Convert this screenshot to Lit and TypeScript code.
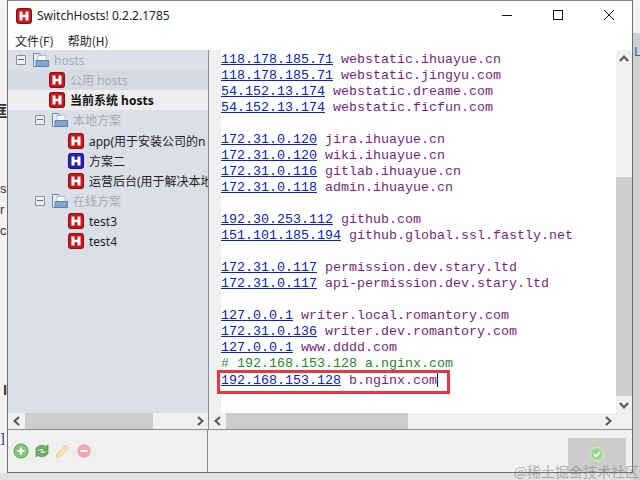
import { LitElement, html, css, svg } from "lit";
import { customElement } from "lit/decorators.js";

type Tok = [string, string];
const LINES: Tok[][] = [
  [["ip","118.178.185.71"],["d","webstatic.ihuayue.cn"]],
  [["ip","118.178.185.71"],["d","webstatic.jingyu.com"]],
  [["ip","54.152.13.174"],["d","webstatic.dreame.com"]],
  [["ip","54.152.13.174"],["d","webstatic.ficfun.com"]],
  [],
  [["ip","172.31.0.120"],["d","jira.ihuayue.cn"]],
  [["ip","172.31.0.120"],["d","wiki.ihuayue.cn"]],
  [["ip","172.31.0.116"],["d","gitlab.ihuayue.cn"]],
  [["ip","172.31.0.118"],["d","admin.ihuayue.cn"]],
  [],
  [["ip","192.30.253.112"],["d","github.com"]],
  [["ip","151.101.185.194"],["d","github.global.ssl.fastly.net"]],
  [],
  [["ip","172.31.0.117"],["d","permission.dev.stary.ltd"]],
  [["ip","172.31.0.117"],["d","api-permission.dev.stary.ltd"]],
  [],
  [["ip","127.0.0.1"],["d","writer.local.romantory.com"]],
  [["ip","172.31.0.136"],["d","writer.dev.romantory.com"]],
  [["ip","127.0.0.1"],["d","www.dddd.com"]],
  [["c","# 192.168.153.128 a.nginx.com"]],
];

function hIcon(color: string, dark: string) {
  return html`<svg class="hicon" viewBox="0 0 16 16" width="16" height="16">
    <rect x="0.5" y="0.5" width="15" height="15" rx="2" fill="${color}" stroke="${dark}"></rect>
    <path d="M3.500 3.500h3v3.200h3V3.500h3v9h-3V9.200h-3v3.300h-3z" fill="#fff"></path>
  </svg>`;
}

const folder = html`<svg class="folder" viewBox="0 0 16 16" width="16" height="16">
  <path d="M0.5 1.500h6l1 1.500v11.500h-7z" fill="#e8edf4" stroke="#6f86a6"></path>
  <rect x="5" y="3.500" width="8" height="5" fill="#fff" stroke="#9aa8ba" stroke-width=".7"></rect>
  <path d="M3 8.500h12.500v6h-12.500z" fill="#7fa6d4" stroke="#5f82ad"></path>
</svg>`;

const minus = html`<span class="toggle"></span>`;

@customElement("app-root")
export class AppRoot extends LitElement {
  static styles = css`
    :host { display: block; width: 640px; height: 480px; position: relative; overflow: hidden;
      background: #f3f3f3; font-family: "Noto Sans", "Noto Sans CJK SC", sans-serif; }
    .bg { position: absolute; color: #333; font: 13px "Liberation Sans", sans-serif; }
    .bg.big { font: bold 16px "Noto Sans CJK SC", sans-serif; }
    .rside { position: absolute; left: 633px; top: 33px; width: 7px; height: 447px; background: #cfcfcf; }
    .shadow { position: absolute; left: 0; right: 0; top: 473px; height: 7px; background: #e2e2e2; }
    .win { position: absolute; left: 7px; top: 0; width: 626px; height: 473px; box-sizing: border-box;
      background: #f0f0f0; border: 1px solid #6f6f6f; border-top: 1px solid #888;
      display: flex; flex-direction: column; }
    .title { height: 29px; background: #fff; display: flex; align-items: center; padding-left: 8px; gap: 5px;
      font: 12px "Noto Sans", sans-serif; color: #222; flex: none; }
    .title .t { flex: 1; }
    .wb { width: 46px; display: flex; justify-content: center; margin-bottom: 1px; }
    .menu { height: 20px; background: #fff; display: flex; gap: 14px; padding-left: 7px; font: 12px "Noto Sans CJK SC", sans-serif;
      color: #222; align-items: center; flex: none; }
    .main { flex: 1; display: flex; min-height: 0; }
    .left { width: 200px; flex: none; display: flex; flex-direction: column; border-right: 1px solid #8c8c8c; }
    .tree { flex: 1; background: #dbe0e8; overflow: hidden; }
    .row { height: 20px; display: flex; align-items: center; white-space: nowrap; overflow: hidden;
      font: 12px "Noto Sans", "Noto Sans CJK SC", sans-serif; color: #222; }
    .row .ico { flex: none; display: flex; margin-right: 5px; }
    .row.l0 { padding-left: 8px; }
    .row.l1 { padding-left: 41px; }
    .row.g1 { padding-left: 27px; }
    .row.l2 { padding-left: 60px; }
    .row.gap { margin-bottom: 1px; }
    .row.sel { background: #eeeeee; font-weight: 700; color: #111; }
    .row.dim { color: #a6abb3; }
    .row.band { background: #d6dbe3; }
    .toggle { width: 8px; height: 8px; border: 1px solid #8a8f96; background: #eef0f3; border-radius: 1px; margin-right: 7px; position: relative; flex: none; }
    .toggle::after { content: ""; position: absolute; left: 1px; right: 1px; top: 3px; height: 1px; background: #666; }
    .hbar { height: 16px; background: #f0f0f0; display: flex; align-items: center; flex: none; }
    .arrow { width: 17px; flex: none; display: flex; justify-content: center; align-items: center; }
    .track { flex: 1; height: 100%; display: flex; }
    .thumb { background: #cdcdcd; height: 100%; }
    .right { flex: 1; display: flex; flex-direction: column; min-width: 0; }
    .edwrap { flex: 1; display: flex; min-height: 0; }
    .gutter { width: 12px; background: #f0f0f0; flex: none; }
    .code { flex: 1; background: #fff; padding-top: 2px; overflow: hidden; min-width: 0;
      font: 13.33px/16px "Liberation Mono", "Courier New", monospace; color: #7a1f7f; }
    .line { height: 16px; white-space: pre; }
    .ip { color: #0a20c8; text-decoration: underline; }
    .c { color: #1f8a2b; }
    .caret { display: inline-block; width: 1px; height: 15px; background: #1a1ab0; vertical-align: -3px; }
    .vbar { width: 16px; background: #f0f0f0; flex: none; display: flex; flex-direction: column; }
    .vthumb { background: #cdcdcd; flex: 1; margin-top: 110px; }
    .varrow { height: 17px; flex: none; display: flex; justify-content: center; align-items: center; }
    .foot { height: 42px; flex: none; border-top: 1px solid #8c8c8c; display: flex; align-items: center; background: #f0f0f0; }
    .tools { width: 200px; height: 100%; flex: none; display: flex; align-items: center; gap: 5px; padding-left: 5px; box-sizing: border-box;
      border-right: 1px solid #8c8c8c; }
    .ok { margin-left: auto; margin-right: 6px; width: 58px; height: 100%; display: flex; align-items: center; justify-content: center; }
    .okb { width: 58px; height: 34px; margin-top: 8px; background: #cccccc; display: flex; justify-content: center; align-items: center; padding-bottom: 2px; box-sizing: border-box; }
    .mark { position: absolute; left: 217px; top: 370px; width: 233px; height: 24px; box-sizing: border-box; border: 3px solid #e6393f; pointer-events: none; }
    .wm { position: absolute; right: 1px; top: 461px; font: 14px "Noto Sans CJK SC", sans-serif; color: rgba(120,120,120,.55); white-space: nowrap; }
  `;

  private chev(d: string) {
    const p: Record<string, string> = {
      l: "M7 1 2.500 5 7 9", r: "M3 1 7.500 5 3 9", u: "M1 7 5 2.500 9 7", d: "M1 3 5 7.500 9 3",
    };
    return svg`<svg width="10" height="10" viewBox="0 0 10 10"><path d="${p[d]}" fill="none" stroke="#555" stroke-width="2"></path></svg>`;
  }

  render() {
    const red = hIcon("#c9161a", "#8c0f12");
    const blue = hIcon("#2a1fb0", "#1a1480");
    return html`
      <div class="shadow"></div>
      <div class="rside"></div>
      <span class="bg big" style="left:-9px;top:98px">框</span>
      <span class="bg" style="left:0;top:181px">st</span>
      <span class="bg" style="left:0;top:202px">r</span>
      <span class="bg" style="left:0;top:223px">c</span>
      <span class="bg" style="left:3px;top:381px;font-weight:700;font-size:15px;color:#4a3a2a">I</span>
      <span class="bg" style="left:1px;top:430px;color:#2a2a50">]</span>
      <span class="bg" style="left:634px;top:44px;color:#2a6fb5">L</span>
      <div class="win">
        <div class="title">
          ${red}
          <span class="t">SwitchHosts! 0.2.2.1785</span>
          <span class="wb"><svg width="12" height="12" viewBox="0 0 12 12"><path d="M1 6.500h10" stroke="#111"></path></svg></span>
          <span class="wb"><svg width="12" height="12" viewBox="0 0 12 12"><rect x="1.500" y="1.500" width="9" height="9" fill="none" stroke="#111"></rect></svg></span>
          <span class="wb"><svg width="12" height="12" viewBox="0 0 12 12"><path d="M1 1l10 10M11 1 1 11" stroke="#111"></path></svg></span>
        </div>
        <div class="menu"><span>文件(F)</span><span>帮助(H)</span></div>
        <div class="main">
          <div class="left">
            <div class="tree">
              <div class="row l0 dim">${minus}<span class="ico">${folder}</span>hosts</div>
              <div class="row l1 dim band"><span class="ico">${red}</span>公用 hosts</div>
              <div class="row l1 sel"><span class="ico">${red}</span>当前系统 hosts</div>
              <div class="row g1 dim gap">${minus}<span class="ico">${folder}</span>本地方案</div>
              <div class="row l2"><span class="ico">${red}</span>app(用于安装公司的n</div>
              <div class="row l2"><span class="ico">${blue}</span>方案二</div>
              <div class="row l2"><span class="ico">${red}</span>运营后台(用于解决本地</div>
              <div class="row g1 dim">${minus}<span class="ico">${folder}</span>在线方案</div>
              <div class="row l2"><span class="ico">${red}</span>test3</div>
              <div class="row l2"><span class="ico">${red}</span>test4</div>
            </div>
            <div class="hbar">
              <span class="arrow">${this.chev("l")}</span>
              <div class="track"><div class="thumb" style="width:128px"></div></div>
              <span class="arrow">${this.chev("r")}</span>
            </div>
          </div>
          <div class="right">
            <div class="edwrap">
              <div class="gutter"></div>
              <div class="code">
                ${LINES.map((l) => html`<div class="line">${l.map((t, i) =>
                  html`${i ? " " : ""}<span class="${t[0]}">${t[1]}</span>`)}</div>`)}
                <div class="line"><span class="ip">192.168.153.128</span> <span>b.nginx.com</span><span class="caret"></span></div>
              </div>
              <div class="vbar">
                <span class="varrow">${this.chev("u")}</span>
                <div class="vthumb"></div>
                <span class="varrow">${this.chev("d")}</span>
              </div>
            </div>
            <div class="hbar">
              <span class="arrow">${this.chev("l")}</span>
              <div class="track"><div class="thumb" style="width:182px"></div></div>
              <span class="arrow">${this.chev("r")}</span>
              <span style="width:16px"></span>
            </div>
          </div>
        </div>
        <div class="foot">
          <div class="tools">
            <svg width="16" height="16" viewBox="0 0 16 16"><circle cx="8" cy="8" r="7" fill="#7fcb72" stroke="#4f9f46"></circle><path d="M8 4.500v7M4.500 8h7" stroke="#fff" stroke-width="2.200"></path></svg>
            <svg width="16" height="16" viewBox="0 0 16 16"><path d="M1.500 7a6.500 5.500 0 0 1 10.500-3.500l2-1.500v6H8.500l2-1.500A4 3 0 0 0 4 7zM14.500 9a6.500 5.500 0 0 1-10.500 3.500l-2 1.500V8h5.500l-2 1.500A4 3 0 0 0 12 9z" fill="#68b85c" stroke="#3d8a35" stroke-width=".6"></path></svg>
            <svg width="16" height="16" viewBox="0 0 16 16"><path d="M1 15l1-4 8.500-9 3 3-8.500 8.500z" fill="#f5e6a8" stroke="#d8cc9a"></path></svg>
            <svg width="16" height="16" viewBox="0 0 16 16"><circle cx="8" cy="8" r="6.500" fill="#f2a8a8" stroke="#eebbbb"></circle><path d="M4.500 8h7" stroke="#fff" stroke-width="2"></path></svg>
          </div>
          <div class="ok"><div class="okb">
            <svg width="14" height="14" viewBox="0 0 14 14"><circle cx="7" cy="7" r="6.500" fill="#9fd68f" stroke="#d5efd0"></circle><path d="M3.800 7l2.300 2.400 4-4.400" fill="none" stroke="#fff" stroke-width="1.600"></path></svg>
          </div></div>
        </div>
      </div>
      <div class="mark"></div>
      <div class="wm">@稀土掘金技术社区</div>
    `;
  }
}
